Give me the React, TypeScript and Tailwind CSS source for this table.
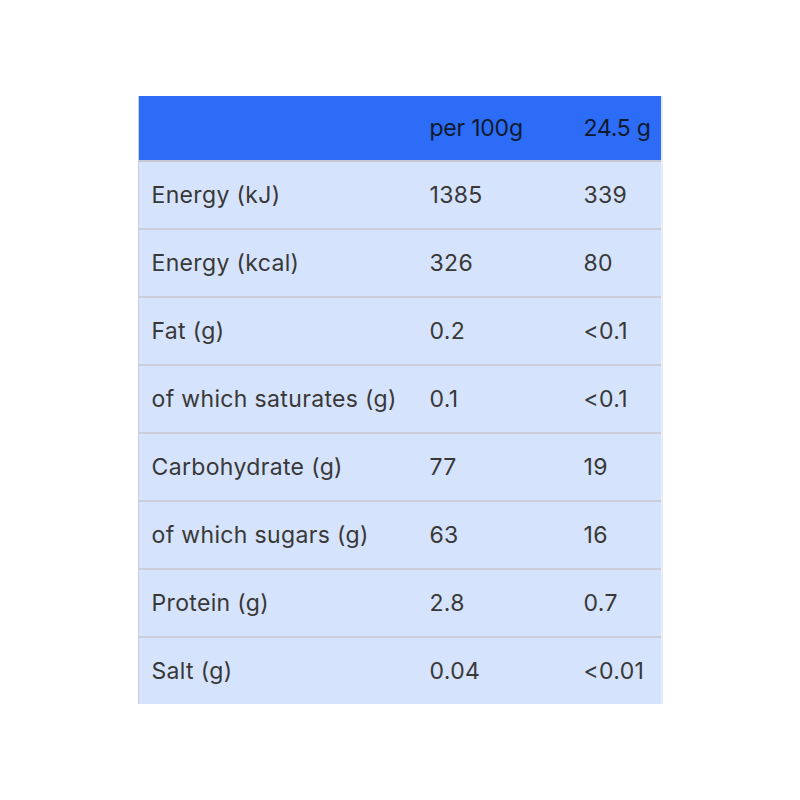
const rows: [string, string, string][] = [
  ["Energy (kJ)", "1385", "339"],
  ["Energy (kcal)", "326", "80"],
  ["Fat (g)", "0.2", "<0.1"],
  ["of which saturates (g)", "0.1", "<0.1"],
  ["Carbohydrate (g)", "77", "19"],
  ["of which sugars (g)", "63", "16"],
  ["Protein (g)", "2.8", "0.7"],
  ["Salt (g)", "0.04", "<0.01"],
];

export default function App() {
  return (
    <div
      className="w-[800px] h-[800px] bg-white pt-[96px]"
      style={{ fontFamily: "Inter, 'Liberation Sans', sans-serif" }}
    >
      <div className="mx-auto w-[525px] border-l border-l-[#c9ced8] border-r-2 border-r-[#e6eefd]">
        {/* Header */}
        <div className="grid grid-cols-[278px_155px_1fr] h-[66px] items-center bg-[#2c6cf6] text-[23px] tracking-[-0.01em] text-[#0f1a2e] border-b-2 border-b-[#c3c8d2]">
          <div />
          <div className="pl-[13px] whitespace-nowrap">per 100g</div>
          <div className="pl-[12px] whitespace-nowrap">24.5 g</div>
        </div>

        {rows.map(([name, per100, portion], i) => (
          <div
            key={name}
            className={
              i < rows.length - 1
                ? "grid grid-cols-[278px_155px_1fr] h-[68px] items-center bg-[#d6e3fc] text-[23px] tracking-[0.015em] text-[#383838] border-b-2 border-b-[#c9ced8]"
                : "grid grid-cols-[278px_155px_1fr] h-[66px] items-center bg-[#d6e3fc] text-[23px] tracking-[0.015em] text-[#383838]"
            }
          >
            <div className="pl-[13px] whitespace-nowrap">{name}</div>
            <div className="pl-[13px]">{per100}</div>
            <div className="pl-[12px]">{portion}</div>
          </div>
        ))}
      </div>
    </div>
  );
}
